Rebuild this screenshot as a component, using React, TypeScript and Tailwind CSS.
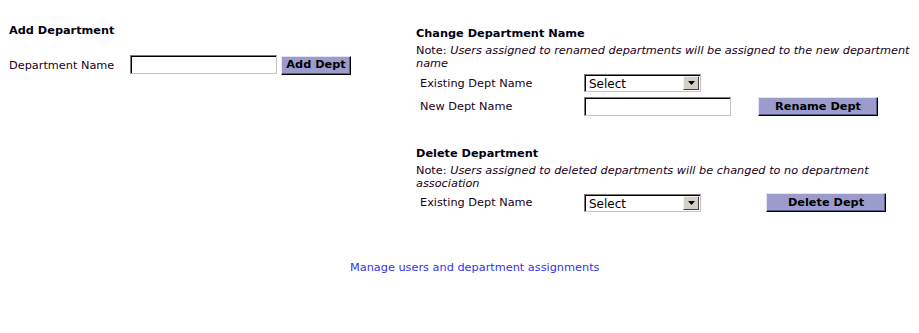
import React from "react";

const font = { fontFamily: '"DejaVu Sans", Verdana, sans-serif' };

function TextInput({ w }: { w: string }) {
  return (
    <div
      className={`${w} h-[19px] bg-white border border-t-[#7a7a7a] border-l-[#7a7a7a] border-b-[#c4c4c4] border-r-[#c4c4c4] shadow-[inset_1px_1px_0_#000]`}
    />
  );
}

function Btn({ label, w }: { label: string; w: string }) {
  return (
    <div
      className={`${w} h-[19px] flex items-center justify-center bg-[#9c9ccc] border border-t-[#e4e4f4] border-l-[#e4e4f4] border-b-[#000] border-r-[#000] shadow-[inset_-1px_-1px_0_#5c5c8c] text-[11.3px] font-bold text-black leading-none`}
    >
      {label}
    </div>
  );
}

function SelectBox() {
  return (
    <div className="w-[117px] h-[18px] flex bg-white border border-t-[#7a7a7a] border-l-[#7a7a7a] border-b-[#c4c4c4] border-r-[#c4c4c4] shadow-[inset_1px_1px_0_#000]">
      <div className="flex-1 pl-[4px] pt-[1px] text-[12px] leading-[16px] text-black">Select</div>
      <div className="w-[16px] h-[14px] mt-[1px] mr-[1px] bg-[#d4d0c8] border border-t-[#f4f4f4] border-l-[#f4f4f4] border-b-[#404040] border-r-[#404040] flex items-center justify-center">
        <svg width="7" height="4" viewBox="0 0 7 4">
          <polygon points="0,0 7,0 3.5,4" fill="#000" />
        </svg>
      </div>
    </div>
  );
}

export default function App() {
  return (
    <div className="w-[919px] h-[333px] bg-white text-[11.3px] text-[#200020]" style={font}>
      <div className="flex pt-[24px]">
        <div className="w-[416px] shrink-0 pl-[9px]">
          <div className="font-bold leading-[13px] text-[#000010]">Add Department</div>
          <div className="mt-[18px] flex items-center h-[19px]">
            <div className="w-[121px] pt-[3px]">Department Name</div>
            <TextInput w="w-[147px]" />
            <div className="ml-[4px] mt-[1px]">
              <Btn label="Add Dept" w="w-[70px]" />
            </div>
          </div>
        </div>
        <div className="pt-[3px] flex-1">
          <div className="font-bold leading-[13px] text-[#000010]">Change Department Name</div>
          <div className="mt-[4px] leading-[13px] whitespace-nowrap">
            Note: <i>Users assigned to renamed departments will be assigned to the new department</i>
            <br />
            <i>name</i>
          </div>
          <div className="mt-[4px] flex items-center h-[18px] pl-[4px]">
            <div className="w-[164px] pt-[2px]">Existing Dept Name</div>
            <SelectBox />
          </div>
          <div className="mt-[5px] flex items-center h-[19px] pl-[4px]">
            <div className="w-[164px] pt-[2px]">New Dept Name</div>
            <TextInput w="w-[147px]" />
            <div className="ml-[27px]">
              <Btn label="Rename Dept" w="w-[120px]" />
            </div>
          </div>

          <div className="mt-[31px] font-bold leading-[13px] text-[#000010]">Delete Department</div>
          <div className="mt-[4px] leading-[13px] whitespace-nowrap">
            Note: <i>Users assigned to deleted departments will be changed to no department</i>
            <br />
            <i>association</i>
          </div>
          <div className="mt-[3px] flex items-center h-[19px] pl-[4px]">
            <div className="w-[164px] pt-[2px]">Existing Dept Name</div>
            <SelectBox />
            <div className="ml-[65px]">
              <Btn label="Delete Dept" w="w-[120px]" />
            </div>
          </div>
        </div>
      </div>
      <div className="mt-[49px] pl-[350px] leading-[13px]">
        <a className="text-[#3333ee] no-underline cursor-pointer">Manage users and department assignments</a>
      </div>
    </div>
  );
}
